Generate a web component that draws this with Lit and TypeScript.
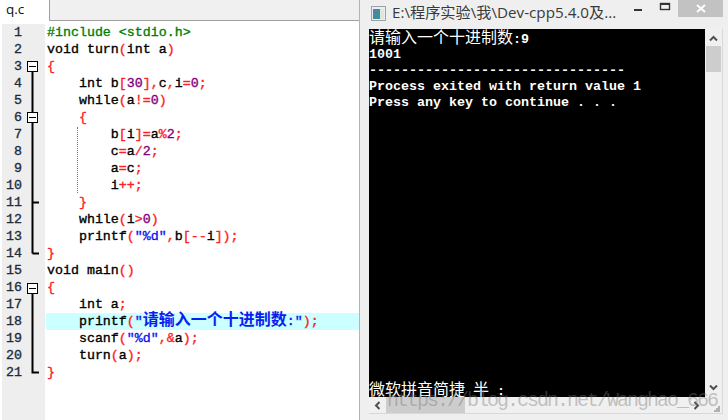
import { LitElement, html, css, svg } from "lit";
import { customElement } from "lit/decorators.js";

const CODE: string[] = [
  "#include <stdio.h>",
  "void turn(int a)",
  "{",
  "    int b[30],c,i=0;",
  "    while(a!=0)",
  "    {",
  "        b[i]=a%2;",
  "        c=a/2;",
  "        a=c;",
  "        i++;",
  "    }",
  "    while(i>0)",
  '    printf("%d",b[--i]);',
  "}",
  "void main()",
  "{",
  "    int a;",
  '    printf("请输入一个十进制数:");',
  '    scanf("%d",&a);',
  "    turn(a);",
  "}",
];

function tokens(line: string) {
  if (line.startsWith("#")) return html`<span class="pp">${line}</span>`;
  const parts = line.match(/"[^"]*"|\d+|[A-Za-z_]+|\s+|./g) ?? [];
  return parts.map((p) => {
    if (p.startsWith('"')) {
      const m = p.match(/^"([^:]*)(:?)"$/);
      if (m && /[^\x00-\x7f]/.test(m[1])) {
        return html`<span class="str">"<span class="cjk">${m[1]}</span>${m[2]}"</span>`;
      }
      return html`<span class="str">${p}</span>`;
    }
    if (/^\d+$/.test(p)) return html`<span class="num">${p}</span>`;
    if (/^[A-Za-z_\s]+$/.test(p)) return html`<span>${p}</span>`;
    return html`<span class="sym">${p}</span>`;
  });
}

const foldBox = (y: number) => svg`
  <rect x="0.5" y="${y + 0.5}" width="10" height="10" fill="#fff" stroke="#000"/>
  <line x1="2" x2="9" y1="${y + 5.5}" y2="${y + 5.5}" stroke="#000"/>`;

const foldMarks = svg`
  <path d="M5.5 11V192.5M5.5 141.5H12M5.5 192.5H12" fill="none" stroke="#000" stroke-width="2"/>
  <path d="M5.5 232V311.5H12" fill="none" stroke="#000" stroke-width="2"/>
  ${foldBox(0)}${foldBox(51)}${foldBox(222)}
`;

@customElement("app-root")
export class AppRoot extends LitElement {
  static styles = css`
    :host {
      display: block;
      position: relative;
      width: 728px;
      height: 420px;
      overflow: hidden;
      background: #fff;
    }
    .page {
      display: flex;
      height: 420px;
    }
    .editor {
      width: 359px;
      flex: none;
      display: flex;
      flex-direction: column;
      background: #fff;
    }
    .tabs {
      display: flex;
      height: 21px;
      flex: none;
    }
    .tab {
      width: 49px;
      box-sizing: border-box;
      padding: 1px 0 0 6px;
      font: 13.5px/17px "Open Sans", "Liberation Sans", sans-serif;
      color: #111;
    }
    .strip {
      flex: 1;
      background: #f0f0f0;
      border-left: 1px solid #a0a0a0;
      border-bottom: 1px solid #a0a0a0;
    }
    .body {
      flex: 1;
      display: flex;
      margin-top: 3px;
    }
    .gutter {
      flex: none;
      width: 43px;
      margin-left: 2px;
      background: #eeeeee;
      display: flex;
      align-items: flex-start;
    }
    .nums {
      width: 20px;
      flex: none;
      text-align: right;
      color: #1c2c3c;
    }
    .fold {
      margin: 37px 0 0 5px;
      flex: none;
    }
    .row,
    .code,
    .nums {
      font: 13.3px/17px "Liberation Mono", monospace;
      -webkit-text-stroke: 0.35px currentColor;
    }
    .row {
      height: 17px;
      white-space: pre;
    }
    .code {
      flex: 1;
      position: relative;
      min-width: 0;
      padding-left: 1px;
      color: #000;
      overflow: hidden;
    }
    .row.hl {
      background: #ccffff;
      border-radius: 2px 0 0 2px;
    }
    .text {
      margin-left: 1px;
    }
    .sym {
      color: #ff2020;
    }
    .num {
      color: #800080;
    }
    .str {
      color: #1010f0;
    }
    .pp {
      color: #008000;
    }
    .cjk {
      font: bold 16px/0 "Noto Sans CJK SC", sans-serif;
      -webkit-text-stroke: 0;
      color: #0a1ef0;
    }
    .guide {
      position: absolute;
      left: 32px;
      top: 103px;
      height: 66px;
      border-left: 1px dotted #777;
    }
    .win {
      flex: 1;
      box-sizing: border-box;
      background: #efefef;
      border-left: 1px solid #b4b4b4;
      padding-left: 9px;
      display: flex;
      flex-direction: column;
    }
    .title {
      height: 29px;
      flex: none;
      display: flex;
      align-items: flex-start;
      box-sizing: border-box;
    }
    .appicon {
      margin: 6px 0 0 2px;
      flex: none;
    }
    .ttext {
      margin: 2px 0 0 6px;
      width: 232px;
      flex: none;
      font: 15.2px/20px "Open Sans", "Noto Sans CJK SC", sans-serif;
      color: #3a3a3a;
      white-space: nowrap;
    }
    .min {
      margin: 0 0 0 10px;
      flex: none;
    }
    .close {
      margin-left: 6px;
      width: 45px;
      height: 17px;
      flex: none;
      background: #c2c2c2;
      display: flex;
      align-items: center;
      justify-content: center;
    }
    .client {
      width: 354px;
      height: 385px;
      flex: none;
      box-sizing: border-box;
      border-right: 1px solid #d9d9d9;
      border-bottom: 1px solid #d9d9d9;
      display: grid;
      grid-template-columns: 336px 17px;
      grid-template-rows: 368px 16px;
    }
    .console {
      background: #000;
      color: #fff;
      display: flex;
      flex-direction: column;
      overflow: hidden;
      font: bold 13.33px/16px "Liberation Mono", monospace;
      white-space: pre;
      padding-top: 2px;
      box-sizing: border-box;
    }
    .console > div {
      height: 16px;
      flex: none;
    }
    .console .zh {
      font: 16px/10px "Noto Sans CJK SC", sans-serif;
    }
    .console .bottom {
      margin-top: auto;
      line-height: 14px;
    }
    .latin {
      font: bold 13.33px/0 "Liberation Mono", monospace;
    }
    .vbar {
      background: #f0f0f0;
      display: flex;
      flex-direction: column;
      align-items: center;
    }
    .vbar .thumb {
      width: 15px;
      height: 26px;
      background: #cdcdcd;
      margin-top: 5px;
    }
    .vbar .up {
      margin-top: 6px;
      height: 6px;
      flex: none;
    }
    .vbar .down {
      margin-top: auto;
      margin-bottom: 6px;
      flex: none;
    }
    .hbar {
      background: #f0f0f0;
      display: flex;
      align-items: center;
    }
    .hbar .left {
      margin-left: 5px;
      flex: none;
    }
    .hbar .thumb {
      width: 79px;
      height: 16px;
      margin-left: 6px;
      background: #cdcdcd;
      flex: none;
    }
    .hbar .right {
      margin-left: auto;
      margin-right: 5px;
      flex: none;
    }
    .corner {
      background: #f0f0f0;
      display: flex;
      align-items: flex-end;
      justify-content: flex-end;
    }
    .corner svg {
      margin: 0 2px 1px 0;
    }
    .wm {
      position: absolute;
      left: 387px;
      top: 388px;
      font: 20px/26px "Liberation Mono", monospace;
      letter-spacing: -2px;
      color: rgba(120, 120, 120, 0.42);
      white-space: nowrap;
    }
  `;

  render() {
    return html`
      <div class="page">
        <section class="editor">
          <div class="tabs">
            <div class="tab">q.c</div>
            <div class="strip"></div>
          </div>
          <div class="body">
            <div class="gutter">
              <div class="nums">${CODE.map((_, i) => html`<div>${i + 1}</div>`)}</div>
              <svg class="fold" width="13" height="345" viewBox="0 0 13 345">${foldMarks}</svg>
            </div>
            <div class="code">
              ${CODE.map(
                (l, i) =>
                  html`<div class="row ${i === 17 ? "hl" : ""}"><span class="text">${tokens(l)}</span></div>`
              )}
              <div class="guide"></div>
            </div>
          </div>
        </section>
        <section class="win">
          <div class="title">
            <svg class="appicon" width="15" height="15" viewBox="0 0 15 15">
              <rect x="0.5" y="0.5" width="14" height="14" fill="#e9eef2" stroke="#9aa3ab" />
              <rect x="2" y="3" width="7" height="10" fill="#3f8f9a" />
              <rect x="2" y="3" width="4" height="5" fill="#5d7f9f" />
              <rect x="9" y="3" width="4" height="10" fill="#dfe8d8" />
            </svg>
            <div class="ttext">E:\\程序实验\\我\\Dev-cpp5.4.0及...</div>
            <svg class="min" width="38" height="14" viewBox="0 0 38 14">
              <rect x="0" y="9" width="8" height="2" fill="#333" />
              <rect x="26.5" y="3.5" width="9" height="6" fill="none" stroke="#333" stroke-width="1.4" />
              <rect x="26" y="3" width="10" height="2" fill="#333" />
            </svg>
            <div class="close">
              <svg width="10" height="9" viewBox="0 0 10 9">
                <path d="M1 1L9 8M9 1L1 8" stroke="#fff" stroke-width="2" fill="none" />
              </svg>
            </div>
          </div>
          <div class="client">
            <div class="console">
              <div class="zh">请输入一个十进制数<span class="latin">:9</span></div>
              <div>1001</div>
              <div>--------------------------------</div>
              <div>Process exited with return value 1</div>
              <div>Press any key to continue . . .</div>
              <div class="zh bottom">微软拼音简捷<span class="latin"> </span>半<span class="latin"> :</span></div>
            </div>
            <div class="vbar">
              <svg class="up" width="9" height="6" viewBox="0 0 9 6">
                <path d="M1 5.5L4.5 2L8 5.5" fill="none" stroke="#505050" stroke-width="2" />
              </svg>
              <div class="thumb"></div>
              <svg class="down" width="9" height="6" viewBox="0 0 9 6">
                <path d="M1 .5L4.5 4L8 .5" fill="none" stroke="#505050" stroke-width="2" />
              </svg>
            </div>
            <div class="hbar">
              <svg class="left" width="6" height="9" viewBox="0 0 6 9">
                <path d="M5.5 1L2 4.5L5.5 8" fill="none" stroke="#505050" stroke-width="2" />
              </svg>
              <div class="thumb"></div>
              <svg class="right" width="6" height="9" viewBox="0 0 6 9">
                <path d="M.5 1L4 4.5L.5 8" fill="none" stroke="#505050" stroke-width="2" />
              </svg>
            </div>
            <div class="corner">
              <svg width="6" height="6" viewBox="0 0 6 6" fill="#b0b0b0">
                <rect x="4" y="0" width="2" height="2" />
                <rect x="2" y="2" width="2" height="2" />
                <rect x="4" y="2" width="2" height="2" />
                <rect x="0" y="4" width="2" height="2" />
                <rect x="2" y="4" width="2" height="2" />
                <rect x="4" y="4" width="2" height="2" />
              </svg>
            </div>
          </div>
        </section>
      </div>
      <div class="wm">https://blog.csdn.net/Wanghao_666</div>
    `;
  }
}
